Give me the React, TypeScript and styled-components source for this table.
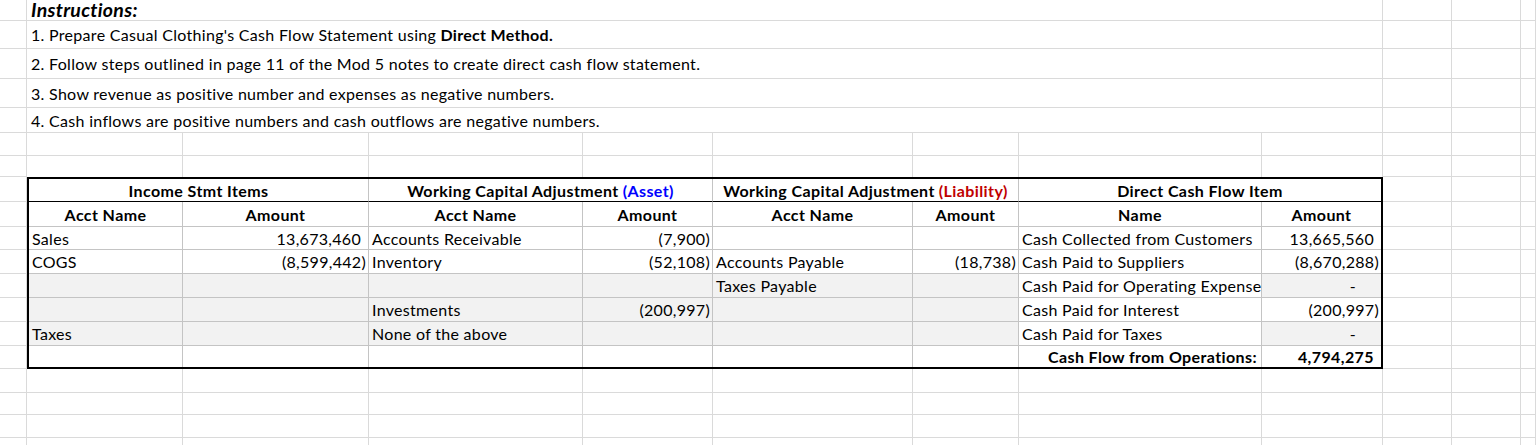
import React from "react";
import styled, { createGlobalStyle } from "styled-components";

const GRID = "#dadada";
const INNER = "#c4c4c4";
const FILL = "#f2f2f2";

const GlobalStyle = createGlobalStyle`
  html, body { margin: 0; padding: 0; background: #ffffff; overflow: hidden; }
  body { font-family: Lato, "Liberation Sans", sans-serif; color: #000; }
`;

const Sheet = styled.div`
  display: grid;
  grid-template-columns: 27px 156px 186px 214px 130px 200px 106px 243px 121px 69px 69px 1fr;
  grid-template-rows: 21px 28px 30px 29px 25px 23px 21px 25px 25px 23px 24px 24px 24px 24px 23px 24px 22px 23px 30px;
  width: 1536px;
  height: 445px;
  overflow: hidden;
`;

const Cell = styled.div<{ $span?: number; $noBottom?: boolean }>`
  box-sizing: border-box;
  grid-column: span ${(p) => p.$span ?? 1};
  border-right: 1px solid ${GRID};
  border-bottom: ${(p) => (p.$noBottom ? "none" : `1px solid ${GRID}`)};
  display: flex;
  align-items: center;
  padding-left: 4px;
  white-space: nowrap;
  overflow: visible;
  font-size: 16px;
  letter-spacing: 0.3px;
`;

const Title = styled.span`
  font-size: 19.5px;
  font-weight: 700;
  font-style: italic;
  letter-spacing: 0.3px;
  margin-top: -1px;
  line-height: 21px;
`;

const TableBox = styled.div`
  grid-column: 2 / span 8;
  grid-row: 8 / span 8;
  box-sizing: border-box;
  border: 2px solid #000;
  display: grid;
  grid-template-columns: 154px 186px 214px 130px 200px 106px 243px 119px;
  grid-template-rows: 23px 25px 23px 24px 24px 24px 24px 21px;
`;

type Align = "left" | "right" | "center";

const TCell = styled.div<{
  $span?: number;
  $align?: Align;
  $bold?: boolean;
  $fill?: boolean;
  $pr?: number;
  $lastCol?: boolean;
  $lastRow?: boolean;
  $darkBottom?: boolean;
}>`
  box-sizing: border-box;
  grid-column: span ${(p) => p.$span ?? 1};
  background: ${(p) => (p.$fill ? FILL : "#ffffff")};
  border-right: ${(p) => (p.$lastCol ? "none" : `1px solid ${INNER}`)};
  border-bottom: ${(p) =>
    p.$lastRow ? "none" : p.$darkBottom ? "1px solid #000" : `1px solid ${INNER}`};
  display: flex;
  align-items: center;
  justify-content: ${(p) =>
    p.$align === "right" ? "flex-end" : p.$align === "center" ? "center" : "flex-start"};
  padding-left: ${(p) => (p.$align === "left" || !p.$align ? "3px" : "0")};
  padding-right: ${(p) => p.$pr ?? 0}px;
  font-size: 16px;
  letter-spacing: ${(p) => (p.$bold ? "0.4px" : "0.3px")};
  font-weight: ${(p) => (p.$bold ? 700 : 400)};
  white-space: nowrap;
  overflow: visible;
`;

const Accent = styled.span<{ $tone: "blue" | "red" }>`
  color: ${(p) => (p.$tone === "blue" ? "#0000ff" : "#c00000")};
  margin-left: 4px;
`;

const instructions: React.ReactNode[] = [
  <>
    1. Prepare Casual Clothing's Cash Flow Statement using&nbsp;<b>Direct Method.</b>
  </>,
  "2. Follow steps outlined in page 11 of the Mod 5 notes to create direct cash flow statement.",
  "3. Show revenue as positive number and expenses as negative numbers.",
  "4. Cash inflows are positive numbers and cash outflows are negative numbers.",
];

type Row = { cells: string[]; gray: boolean; total?: boolean };

const rows: Row[] = [
  {
    cells: ["Sales", "13,673,460", "Accounts Receivable", "(7,900)", "", "", "Cash Collected from Customers", "13,665,560"],
    gray: false,
  },
  {
    cells: ["COGS", "(8,599,442)", "Inventory", "(52,108)", "Accounts Payable", "(18,738)", "Cash Paid to Suppliers", "(8,670,288)"],
    gray: false,
  },
  { cells: ["", "", "", "", "Taxes Payable", "", "Cash Paid for Operating Expense", "-"], gray: true },
  { cells: ["", "", "Investments", "(200,997)", "", "", "Cash Paid for Interest", "(200,997)"], gray: true },
  { cells: ["Taxes", "", "None of the above", "", "", "", "Cash Paid for Taxes", "-"], gray: true },
  { cells: ["", "", "", "", "", "", "Cash Flow from Operations:", "4,794,275"], gray: false, total: true },
];

const subHeads = ["Acct Name", "Amount", "Acct Name", "Amount", "Acct Name", "Amount", "Name", "Amount"];

const amountPad = (v: string) => (v.startsWith("(") ? 2 : v === "-" ? 25 : 7);

const blankRow = (key: string, noBottom = false) => (
  <React.Fragment key={key}>
    <Cell />
    {Array.from({ length: 8 }).map((_, i) => (
      <Cell key={i} $noBottom={noBottom} />
    ))}
    <Cell />
    <Cell />
    <Cell />
  </React.Fragment>
);

export default function App() {
  return (
    <>
      <GlobalStyle />
      <Sheet>
        <Cell />
        <Cell $span={8}>
          <Title>Instructions:</Title>
        </Cell>
        <Cell />
        <Cell />
        <Cell />
        {instructions.map((t, i) => (
          <React.Fragment key={i}>
            <Cell />
            <Cell $span={8}>{t}</Cell>
            <Cell />
            <Cell />
            <Cell />
          </React.Fragment>
        ))}
        {blankRow("b5")}
        {blankRow("b6", true)}

        <TableBox>
          <TCell $span={2} $align="center" $bold $darkBottom>
            Income Stmt Items
          </TCell>
          <TCell $span={2} $align="center" $bold $darkBottom>
            Working Capital Adjustment<Accent $tone="blue">(Asset)</Accent>
          </TCell>
          <TCell $span={2} $align="center" $bold $darkBottom>
            Working Capital Adjustment<Accent $tone="red">(Liability)</Accent>
          </TCell>
          <TCell $span={2} $align="center" $bold $darkBottom $lastCol>
            Direct Cash Flow Item
          </TCell>
          {subHeads.map((h, i) => (
            <TCell key={i} $align="center" $bold $lastCol={i === 7}>
              {h}
            </TCell>
          ))}
          {rows.map((r, ri) =>
            r.cells.map((v, ci) => {
              const isAmt = ci % 2 === 1;
              const lastRow = ri === rows.length - 1;
              const fill = r.gray && (ci < 6 || (ci === 7 && v === "-"));
              if (r.total && ci === 6) {
                return (
                  <TCell key={`${ri}-${ci}`} $align="right" $bold $pr={4} $lastRow={lastRow}>
                    {v}
                  </TCell>
                );
              }
              return (
                <TCell
                  key={`${ri}-${ci}`}
                  $align={isAmt ? "right" : "left"}
                  $pr={isAmt && v ? amountPad(v) : 0}
                  $bold={r.total}
                  $fill={fill}
                  $lastCol={ci === 7}
                  $lastRow={lastRow}
                >
                  {v}
                </TCell>
              );
            })
          )}
        </TableBox>

        {Array.from({ length: 8 }).map((_, i) => (
          <React.Fragment key={`side${i}`}>
            <Cell />
            <Cell />
            <Cell />
            <Cell />
          </React.Fragment>
        ))}

        {blankRow("a1")}
        {blankRow("a2")}
        {blankRow("a3")}
        {blankRow("a4")}
      </Sheet>
    </>
  );
}
